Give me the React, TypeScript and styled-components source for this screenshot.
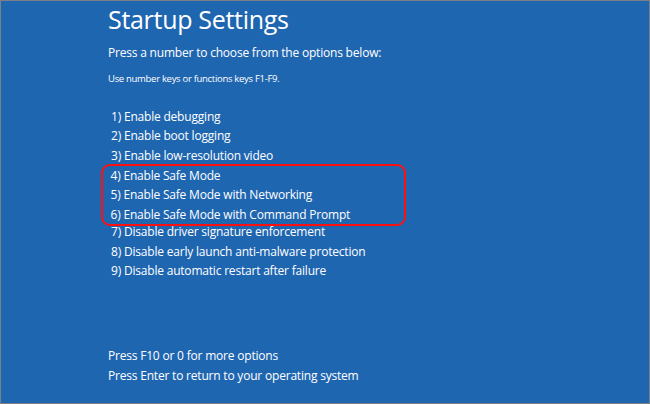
import React from 'react';
import styled, { createGlobalStyle } from 'styled-components';

const GlobalStyle = createGlobalStyle`
  html, body {
    margin: 0;
    padding: 0;
    background: #1f66b1;
  }
`;

const Screen = styled.div`
  box-sizing: border-box;
  width: 650px;
  height: 404px;
  border: 1px solid #7d7f85;
  background: #1f66b1;
  color: #ffffff;
  font-family: 'Open Sans', 'Noto Sans', sans-serif;
  padding: 0 0 0 107px;
  display: flex;
  flex-direction: column;
  overflow: hidden;
`;

const Title = styled.h1`
  margin: 1px 0 0;
  font-size: 25px;
  font-weight: 400;
  line-height: 34px;
  letter-spacing: -0.3px;
`;

const Prompt = styled.p`
  margin: 8px 0 0;
  font-size: 12px;
  line-height: 18px;
  letter-spacing: -0.2px;
`;

const Hint = styled.p`
  margin: 10px 0 0;
  font-size: 9.5px;
  line-height: 14px;
  letter-spacing: -0.3px;
`;

const OptionList = styled.ol`
  list-style: none;
  margin: 21px 0 0;
  padding: 0;
  display: flex;
  flex-direction: column;
`;

const Option = styled.li`
  font-size: 12px;
  line-height: 19.4px;
  letter-spacing: -0.2px;
  padding-left: 3px;
`;

// red marker drawn round the safe mode options
const Highlight = styled.div`
  box-sizing: border-box;
  width: 305px;
  margin: -1.5px 0 -3.5px -7px;
  padding: 0 0 0 4.5px;
  border: 2.5px solid #ff1010;
  border-radius: 9px;
`;

const Footer = styled.div`
  margin-top: auto;
  padding-bottom: 18px;
  display: flex;
  flex-direction: column;
`;

const FooterLine = styled.p`
  margin: 0;
  font-size: 12px;
  line-height: 19.4px;
  letter-spacing: -0.2px;
`;

const before = ['1) Enable debugging', '2) Enable boot logging', '3) Enable low-resolution video'];
const safe = [
  '4) Enable Safe Mode',
  '5) Enable Safe Mode with Networking',
  '6) Enable Safe Mode with Command Prompt',
];
const after = [
  '7) Disable driver signature enforcement',
  '8) Disable early launch anti-malware protection',
  '9) Disable automatic restart after failure',
];

export default function App() {
  return (
    <>
      <GlobalStyle />
      <Screen>
        <Title>Startup Settings</Title>
        <Prompt>Press a number to choose from the options below:</Prompt>
        <Hint>Use number keys or functions keys F1-F9.</Hint>
        <OptionList>
          {before.map((t) => (
            <Option key={t}>{t}</Option>
          ))}
          <Highlight>
            {safe.map((t) => (
              <Option key={t}>{t}</Option>
            ))}
          </Highlight>
          {after.map((t) => (
            <Option key={t}>{t}</Option>
          ))}
        </OptionList>
        <Footer>
          <FooterLine>Press F10 or 0 for more options</FooterLine>
          <FooterLine>Press Enter to return to your operating system</FooterLine>
        </Footer>
      </Screen>
    </>
  );
}
